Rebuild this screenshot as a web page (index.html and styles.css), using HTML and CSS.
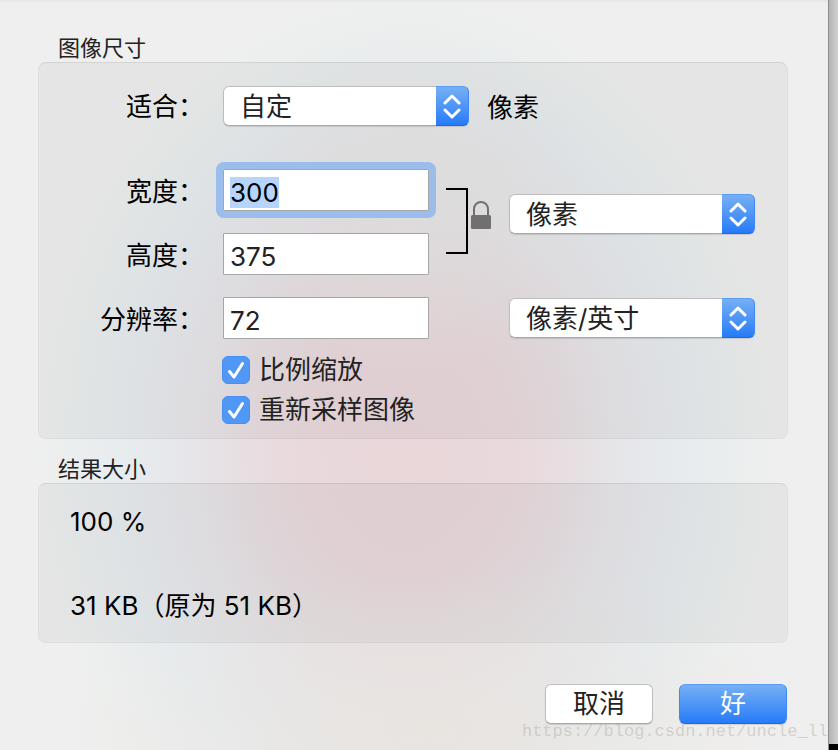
FILE: index.html
```html
<!DOCTYPE html>
<html lang="zh-CN">
<head>
<meta charset="utf-8">
<title>图像尺寸</title>
<link rel="stylesheet" href="styles.css">
</head>
<body>
<form class="dialog">
  <fieldset class="group">
    <legend class="group-title">图像尺寸</legend>
    <div class="panel">
      <div class="size-grid">
        <label class="label row-fit" for="fit">适合：</label>
        <div class="fit-row row-fit">
          <div class="popup">
            <select id="fit"><option>自定</option></select>
            <span class="popup-cap"><svg width="18" height="28" viewBox="0 0 18 28"><path d="M2 11 9 4l7 7M2 18l7 7 7-7"/></svg></span>
          </div>
          <span class="unit">像素</span>
        </div>

        <label class="label row-width" for="width">宽度：</label>
        <input class="field row-width" id="width" type="text" value="300" autofocus>
        <label class="label row-height" for="height">高度：</label>
        <input class="field row-height" id="height" type="text" value="375">
        <div class="link">
          <span class="bracket"></span>
          <svg class="lock" width="20" height="29" viewBox="0 0 20 29"><path d="M3 15V9a7 7 0 0 1 14 0v6" fill="none" stroke="#707070" stroke-width="2"/><rect y="15" width="20" height="14" rx="1.5" fill="#707070"/></svg>
        </div>
        <div class="popup unit-size">
          <select aria-label="尺寸单位"><option>像素</option></select>
          <span class="popup-cap"><svg width="18" height="28" viewBox="0 0 18 28"><path d="M2 11 9 4l7 7M2 18l7 7 7-7"/></svg></span>
        </div>

        <label class="label row-resolution" for="resolution">分辨率：</label>
        <input class="field row-resolution" id="resolution" type="text" value="72">
        <div class="popup unit-resolution">
          <select aria-label="分辨率单位"><option>像素/英寸</option></select>
          <span class="popup-cap"><svg width="18" height="28" viewBox="0 0 18 28"><path d="M2 11 9 4l7 7M2 18l7 7 7-7"/></svg></span>
        </div>
      </div>
      <div class="checks">
        <label class="check"><span class="box"><input type="checkbox" checked><svg width="28" height="28" viewBox="0 0 28 28"><path d="M7.500 15.500 12 21 20.500 7.500"/></svg></span>比例缩放</label>
        <label class="check"><span class="box"><input type="checkbox" checked><svg width="28" height="28" viewBox="0 0 28 28"><path d="M7.500 15.500 12 21 20.500 7.500"/></svg></span>重新采样图像</label>
      </div>
    </div>
  </fieldset>

  <fieldset class="group">
    <legend class="group-title">结果大小</legend>
    <div class="panel results">
      <p>100 %</p>
      <p>31 KB（原为 51 KB）</p>
    </div>
  </fieldset>

  <div class="actions">
    <button class="button" type="button">取消</button>
    <button class="button primary" type="submit">好</button>
  </div>
  <span class="watermark">https://blog.csdn.net/uncle_ll</span>
</form>
<div class="desktop"></div>
<script src="script.js"></script>
</body>
</html>
```
FILE: styles.css
```css
* {
  box-sizing: border-box;
}

body {
  margin: 0;
  min-height: 100vh;
  display: flex;
  font: 26px/36px Inter, "Noto Sans CJK SC", sans-serif;
  color: #000;
}

input,
select,
button {
  margin: 0;
  font: inherit;
  color: #222;
}

.dialog {
  position: relative;
  flex: 1;
  padding: 32px 40px 24px 38px;
  border-top: 2px solid #e6e8e8;
  background:
    radial-gradient(ellipse 45% 24% at 52% 98%, rgba(233, 228, 223, 0.9), rgba(233, 228, 223, 0) 100%),
    radial-gradient(ellipse 22% 24% at 50% 26%, rgba(232, 229, 228, 0.8), rgba(232, 229, 228, 0) 100%),
    radial-gradient(ellipse 47% 64% at 49% 60%, #e9d7da 0%, #e9d9dc 28%, #e7dfe2 43%, #e6e7eb 58%, #e7ecef 74%, #edefee 90%, #efefef 100%);
}

.desktop {
  width: 10px;
  border-left: 1px solid #8c8c8c;
  background: linear-gradient(to top, #000 6px, transparent 6px), linear-gradient(to right, #b4b4b4, #d0d0d0);
}

.group {
  min-width: 0;
  margin: 0 0 16px;
  padding: 0;
  border: 0;
}

.group-title {
  padding: 0 20px;
  font-size: 22px;
  line-height: 28px;
  color: #222;
}

.panel {
  border: 1px solid rgba(0, 0, 0, 0.03);
  border-top-color: rgba(0, 0, 0, 0.08);
  border-radius: 8px;
  background: rgba(0, 0, 0, 0.04);
}

.size-grid {
  display: grid;
  grid-template-columns: 184px 206px 80px 246px;
  grid-template-rows: 61px 42px 42px 42px;
  row-gap: 22px;
  align-items: center;
  padding-top: 23px;
}

.label {
  grid-column: 1;
  padding: 3px 19px 0 0;
  text-align: right;
}

.fit-row {
  grid-column: 2 / -1;
  display: flex;
  align-items: center;
  gap: 18px;
}

.unit {
  padding-top: 3px;
}

.row-fit {
  grid-row: 1;
  align-self: start;
}

.row-width {
  grid-row: 2;
}

.row-height {
  grid-row: 3;
}

.row-resolution {
  grid-row: 4;
}

.field {
  grid-column: 2;
  width: 100%;
  height: 42px;
  padding: 5px 6px 1px;
  border: 1px solid #a6a6a6;
  border-radius: 1px;
  background: #fff;
  line-height: 34px;
}

.field:focus {
  outline: 7px solid #9abdeb;
  color: #000;
}

.field::selection {
  background: #b5d5fe;
  color: #000;
}

.link {
  grid-column: 3;
  grid-row: 2 / 4;
  display: flex;
  align-items: center;
  gap: 3px;
  padding: 0 0 2px 17px;
}

.bracket {
  width: 22px;
  height: 66px;
  border: 2px solid #000;
  border-left: 0;
}

.lock {
  margin-bottom: 14px;
}

.popup {
  position: relative;
  width: 246px;
  height: 40px;
  border-radius: 6px;
  box-shadow: 0 1px 1px rgba(0, 0, 0, 0.12);
}

.popup select {
  display: block;
  appearance: none;
  width: 100%;
  height: 100%;
  padding: 2px 40px 0 16px;
  border: 1px solid #bdbdbd;
  border-bottom-color: #a8a8a8;
  border-radius: 6px;
  background: #fff;
}

.popup-cap {
  position: absolute;
  inset: 0 0 0 auto;
  width: 33px;
  display: flex;
  align-items: center;
  justify-content: center;
  border: solid #5b9cf0;
  border-width: 1px 1px 1px 0;
  border-right-color: #4388f2;
  border-bottom-color: #1a66f2;
  border-radius: 0 6px 6px 0;
  background: linear-gradient(#76b0f4, #277bf9);
  pointer-events: none;
}

.popup-cap path,
.box path {
  fill: none;
  stroke: #fff;
  stroke-width: 3;
  stroke-linecap: round;
  stroke-linejoin: round;
}

.unit-size {
  grid-column: 4;
  grid-row: 2 / 4;
  margin-bottom: 16px;
}

.unit-resolution {
  grid-column: 4;
  grid-row: 4;
}

.checks {
  display: grid;
  gap: 12px;
  justify-items: start;
  padding: 17px 0 14px 183px;
}

.check {
  display: flex;
  align-items: center;
  gap: 9px;
  height: 28px;
  color: #222;
}

.box {
  display: grid;
}

.box input,
.box svg {
  grid-area: 1 / 1;
}

.box input {
  appearance: none;
  width: 28px;
  height: 28px;
  border: 1px solid #478ff2;
  border-radius: 6px;
  background: #5097f6;
}

.box svg {
  pointer-events: none;
}

.box input:not(:checked) + svg {
  visibility: hidden;
}

.results {
  display: grid;
  gap: 48px;
  padding: 20px 31px 18px;
}

.results p {
  margin: 0;
}

.actions {
  display: flex;
  justify-content: flex-end;
  gap: 26px;
  padding: 25px 1px 0 0;
}

.button {
  width: 108px;
  height: 40px;
  padding: 0;
  border: 1px solid #bdbdbd;
  border-bottom-color: #a8a8a8;
  border-radius: 6px;
  background: #fff;
  box-shadow: 0 1px 1px rgba(0, 0, 0, 0.12);
}

.primary {
  border-color: #5b9cf0 #4388f2 #1a66f2;
  background: linear-gradient(#76b0f4, #277bf9);
  color: #fff;
}

.watermark {
  position: absolute;
  right: 0;
  bottom: 6px;
  font: 17px/24px "Liberation Mono", monospace;
  color: rgba(180, 180, 170, 0.5);
  pointer-events: none;
}
```
FILE: script.js
```js
const widthField = document.getElementById("width");
widthField.focus();
widthField.select();
```
